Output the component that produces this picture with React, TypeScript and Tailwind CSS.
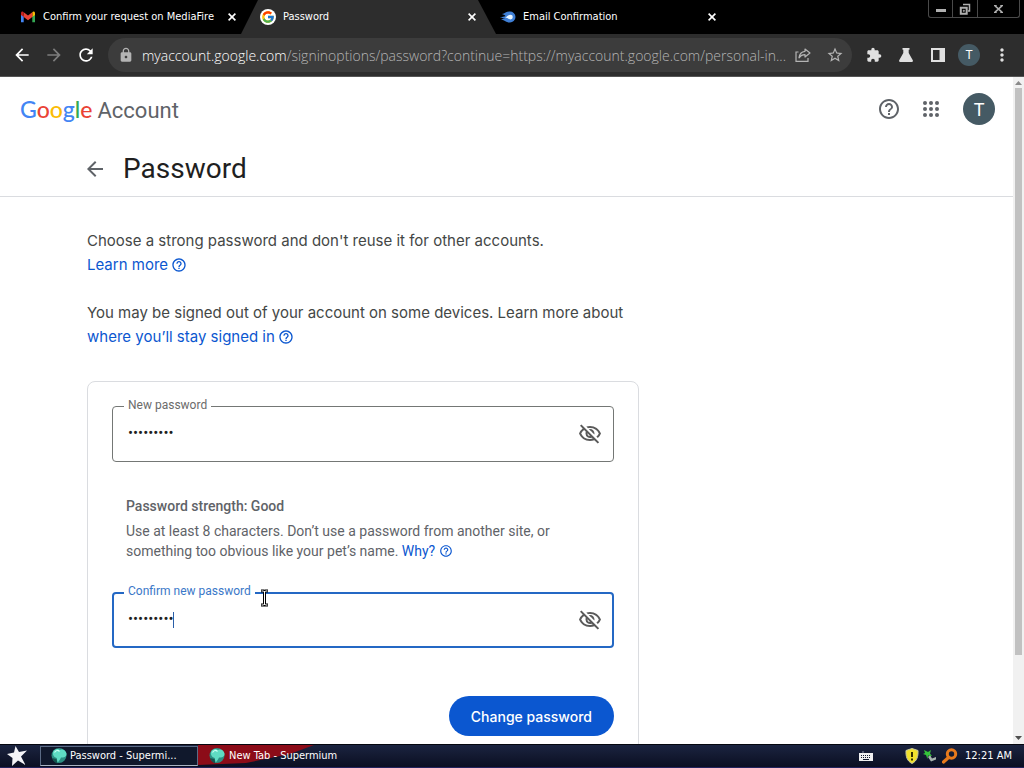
import type { ReactNode } from "react";
import { FcGoogle } from "react-icons/fc";
import {
  MdArrowBack,
  MdArrowForward,
  MdExtension,
  MdHelpOutline,
  MdLock,
  MdMoreVert,
  MdOutlineVisibilityOff,
  MdRefresh,
  MdStarBorder,
} from "react-icons/md";

const SYSTEM_FONT = "font-['DejaVu_Sans_Condensed','Noto_Sans',sans-serif]";

function GmailIcon() {
  return (
    <svg viewBox="0 0 16 12" className="h-3 w-4 shrink-0" aria-hidden="true">
      <path d="M1 2v9.300h2.700V5z" fill="#4285f4" />
      <path d="M15 2v9.300h-2.700V5z" fill="#34a853" />
      <path d="M12.300 1.200V6L15 4V2.200C15 .8 13.500 0 12.300 1.200z" fill="#fbbc04" />
      <path d="M3.700 6V1.200L8 4.500l4.300-3.300V6L8 9.200z" fill="#ea4335" />
      <path d="M1 2.200V4l2.700 2V1.200C2.500 0 1 .8 1 2.200z" fill="#c5221f" />
    </svg>
  );
}

function GoogleTabIcon() {
  return (
    <span className="flex size-4 shrink-0 items-center justify-center rounded-full bg-white">
      <FcGoogle className="size-3.5" />
    </span>
  );
}

function MediaFireIcon() {
  return (
    <svg viewBox="0 0 16 16" className="size-4 shrink-0" aria-hidden="true">
      <path d="M2 5c3-.5 4-2.500 7.500-2.500A5.500 5.500 0 0 1 15.500 8a5.500 5.500 0 0 1-6 5.500C6 13.500 5 11 1 10.500c2-.5 3-.7 4-.9C3.500 9 1.500 9 0 8.700 2 7.700 4 8 5.500 7 4.500 6 3.500 5.500 2 5z" fill="#3f7fd6" />
      <path d="M5 8.600C7 8 8 5.800 10.500 5.800a2.300 2.300 0 0 1 0 4.600C8.500 10.400 7.500 8.800 5 8.600z" fill="#e8f5ff" />
    </svg>
  );
}

function ShareIcon() {
  return (
    <svg viewBox="0 0 16 16" className="size-4" fill="none" stroke="currentColor" strokeWidth="1.200" aria-hidden="true">
      <path d="M3.500 5H1v9.400h12V11" />
      <path d="M10 2l5 4-5 4V7.700C7.500 7.700 5.500 8.500 4 10.800 4.400 7.500 6.500 4.700 10 4.300z" strokeLinejoin="round" />
    </svg>
  );
}

function FlaskIcon() {
  return (
    <svg viewBox="0 0 16 16" className="size-4" fill="currentColor" aria-hidden="true">
      <path d="M4.500 1h7v1.700H10.700V6l4.100 7.300c.4.800 0 1.700-.9 1.700H2.100c-.9 0-1.300-.9-.9-1.700L5.300 6V2.700h-.8z" />
    </svg>
  );
}

function SidePanelIcon() {
  return (
    <svg viewBox="0 0 16 16" className="size-4" aria-hidden="true">
      <path d="M1 1h14v14H1zM3 3v10h6.500V3z" fill="currentColor" fillRule="evenodd" />
    </svg>
  );
}

function AppsIcon() {
  return (
    <svg viewBox="0 0 16 16" className="size-4" fill="currentColor" aria-hidden="true">
      {[2, 8, 14].map((y) => [2, 8, 14].map((x) => <circle key={`${x}-${y}`} cx={x} cy={y} r="2" />))}
    </svg>
  );
}

function GlobeBirdIcon() {
  return (
    <svg viewBox="0 0 18 18" className="size-[18px] shrink-0" aria-hidden="true">
      <circle cx="9" cy="8.500" r="7.500" fill="#2c8f83" />
      <path d="M3.500 4C6 1.500 8 1.500 10 3c3-1.500 6 .5 6.500 3.500.3 3-2.500 4.500-5.500 4-1 2-2 3.500-3.500 5.500L6.800 11C3.500 10 2 7 3.500 4z" fill="#5fdcc3" />
      <path d="M4.500 5.500C6 3 8 3 9.500 4.500" stroke="#c9fff3" strokeWidth="1.200" fill="none" />
      <path d="M2 11c1 3 3 5 5.500 5.500L6.500 12z" fill="#15544f" />
    </svg>
  );
}

function Tab({ icon, title, active, className }: { icon: ReactNode; title: string; active?: boolean; className: string }) {
  return (
    <div className={`flex items-center text-[11px] text-white ${className}`}>
      {icon}
      <a href="#" aria-current={active ? "page" : undefined} className="ml-[7px] min-w-0 flex-1 overflow-hidden whitespace-nowrap">
        {title}
      </a>
      <button type="button" aria-label={`Close ${title}`} className="ml-2 shrink-0 p-[3px]">
        <svg viewBox="0 0 8 8" className="size-2" stroke="currentColor" strokeWidth="1.600" aria-hidden="true">
          <path d="M.6.6l6.800 6.800M7.400.6L.6 7.400" />
        </svg>
      </button>
    </div>
  );
}

function TabStrip() {
  return (
    <div className="flex h-[34px] shrink-0 bg-black">
      <Tab icon={<GmailIcon />} title="Confirm your request on MediaFire" className="w-[241px] pr-0.5 pl-5" />
      <Tab
        active
        icon={<GoogleTabIcon />}
        title="Password"
        className="w-[255px] bg-[#2d2d2d] pr-[17px] pl-[19px] [clip-path:polygon(17px_0,237px_0,100%_100%,0_100%)]"
      />
      <Tab icon={<MediaFireIcon />} title="Email Confirmation" className="w-[223px] pl-1" />
      <div className="ml-auto flex h-[18px] rounded-b-[3px] border border-t-0 border-[#4a4a4a] text-[#b0b0b0]">
        <button type="button" aria-label="Minimize" className="flex w-6 items-end justify-center border-r border-[#4a4a4a] pb-[5px]">
          <span className="h-[3px] w-2.5 bg-current" />
        </button>
        <button type="button" aria-label="Restore" className="flex w-[25px] items-center justify-center border-r border-[#4a4a4a]">
          <svg viewBox="0 0 12 12" className="size-3" fill="none" stroke="currentColor" aria-hidden="true">
            <path d="M4 1.500h6.500V8H9" strokeWidth="1.500" />
            <path d="M1.800 4.800h5.900v5.900H1.800z" strokeWidth="2" />
            <path d="M4.300 7.300h1v1h-1z" strokeWidth="1" />
          </svg>
        </button>
        <button type="button" aria-label="Close window" className="flex w-[41px] items-center justify-center">
          <svg viewBox="0 0 10 10" className="h-2 w-[9px]" preserveAspectRatio="none" stroke="currentColor" strokeWidth="2" aria-hidden="true">
            <path d="M1 1l8 8M9 1L1 9" />
            <path d="M0 .6h3M7 .6h3M0 9.400h3M7 9.400h3" strokeWidth="1.200" />
          </svg>
        </button>
      </div>
      <div className="w-1" />
    </div>
  );
}

function Toolbar() {
  return (
    <div className="flex h-[43px] shrink-0 items-center border-b border-[#555] bg-[#2d2d2d] px-3 text-[#e0e0e0]">
      <button type="button" aria-label="Back" className="text-white">
        <MdArrowBack className="size-5" />
      </button>
      <button type="button" aria-label="Forward" className="ml-3 text-[#7d7d7d]">
        <MdArrowForward className="size-5" />
      </button>
      <button type="button" aria-label="Reload" className="ml-3 text-white">
        <MdRefresh className="size-5" />
      </button>
      <div className="ml-3 flex h-[34px] min-w-0 flex-1 items-center rounded-full bg-[#3c3c3c] pr-2 pl-2.5 text-[#b4b4b4]">
        <MdLock className="size-4 shrink-0" />
        <p className="ml-2 min-w-0 flex-1 font-['Open_Sans',sans-serif] text-[14px] font-light whitespace-nowrap">
          <span className="text-white">myaccount.google.com</span>
          /signinoptions/password?continue=https://myaccount.google.com/personal-in...
        </p>
        <button type="button" aria-label="Share" className="ml-3">
          <ShareIcon />
        </button>
        <button type="button" aria-label="Bookmark this tab" className="ml-[15px]">
          <MdStarBorder className="size-[18px]" />
        </button>
      </div>
      <div className="ml-3.5 flex items-center gap-4">
        <button type="button" aria-label="Extensions">
          <MdExtension className="size-4" />
        </button>
        <button type="button" aria-label="Labs">
          <FlaskIcon />
        </button>
        <button type="button" aria-label="Side panel">
          <SidePanelIcon />
        </button>
      </div>
      <button type="button" className="ml-3 flex size-[22px] items-center justify-center rounded-full bg-[#455a64] font-['Roboto',sans-serif] text-[12px] text-white">
        T
      </button>
      <button type="button" aria-label="Menu" className="ml-3">
        <MdMoreVert className="size-5" />
      </button>
    </div>
  );
}

function HelpLink({ children }: { children: ReactNode }) {
  return (
    <a href="#" className="inline-flex items-center gap-[3px] text-[#0b57d0]">
      {children}
      <MdHelpOutline className="size-4" />
    </a>
  );
}

function PasswordField({ id, label, focused }: { id: string; label: string; focused?: boolean }) {
  return (
    <div
      className={`relative flex h-14 items-center rounded-[4px] ${
        focused ? "border-2 border-[#2468c4] pr-2.5 pl-3.5" : "border border-[#747775] pr-[11px] pl-[15px]"
      }`}
    >
      <label
        htmlFor={id}
        className={`absolute bg-white px-1 text-[12px] leading-4 ${
          focused ? "-top-[11px] left-2.5 text-[#3b78c8]" : "-top-2.5 left-[11px] text-[#6b6b6b]"
        }`}
      >
        {label}
      </label>
      <div className="relative min-w-0 flex-1">
        <input id={id} type="password" defaultValue="goodpass9" className="block w-full pb-0.5 text-[15px] text-[#1f1f1f] outline-none" />
        {focused && <span className="absolute top-1 left-[45px] h-4 w-px bg-[#2a5ea8]" />}
      </div>
      <button type="button" aria-label="Show password" className="text-[#5a5a5a]">
        <MdOutlineVisibilityOff className="size-6" />
      </button>
      {focused && (
        <svg viewBox="0 0 9 18" className="absolute -top-[5px] left-[146px] h-[18px] w-[9px]" fill="none" aria-hidden="true">
          <path d="M1 2h2.500l1 1 1-1H8M4.500 2v14M1 16h2.500l1-1 1 1H8" stroke="#000" strokeWidth="3" />
          <path d="M1.500 2h2l1 1 1-1h2M4.500 2v14M1.500 16h2l1-1 1 1h2" stroke="#fff" strokeWidth="1" />
        </svg>
      )}
    </div>
  );
}

function AccountPage() {
  return (
    <div className="min-w-0 flex-1 overflow-hidden bg-white font-['Roboto',sans-serif]">
      <header className="flex h-16 items-center pr-[18px] pl-5 text-[#5f6368]">
        <a href="#" className="flex items-baseline gap-[5px]">
          <span className="font-['Lato',sans-serif] text-[23px] font-medium">
            <span className="text-[#4285f4]">G</span>
            <span className="text-[#ea4335]">o</span>
            <span className="text-[#fbbc04]">o</span>
            <span className="text-[#4285f4]">g</span>
            <span className="text-[#34a853]">l</span>
            <span className="text-[#ea4335]">e</span>
          </span>
          <span className="text-[22px]">Account</span>
        </a>
        <button type="button" aria-label="Help" className="ml-auto">
          <MdHelpOutline className="size-6" />
        </button>
        <button type="button" aria-label="Google apps" className="ml-[22px]">
          <AppsIcon />
        </button>
        <button type="button" className="ml-6 flex size-8 items-center justify-center rounded-full bg-[#455a64] text-[18px] text-white">
          T
        </button>
      </header>
      <div className="flex h-14 items-center border-b border-[#dadce0] pl-[83px]">
        <button type="button" aria-label="Go back" className="text-[#5f6368]">
          <MdArrowBack className="size-6" />
        </button>
        <h1 className="ml-4 text-[28px] text-[#1f1f1f]">Password</h1>
      </div>
      <main className="max-w-[639px] pt-8 pl-[87px] text-[#444746]">
        <div className="font-['Inter',sans-serif] text-[15px] leading-6">
          <p>
            Choose a strong password and don't reuse it for other accounts.
            <br />
            <HelpLink>Learn more</HelpLink>
          </p>
          <p className="mt-6">
            You may be signed out of your account on some devices. Learn more about
            <br />
            <HelpLink>where you’ll stay signed in</HelpLink>
          </p>
        </div>
        <form className="mt-8 rounded-lg border border-[#dadce0] p-6">
          <PasswordField id="new-password" label="New password" />
          <div className="mt-[34px] mb-[31px] px-3.5 text-[14px] leading-5 text-[#5f6368]">
            <p className="font-medium">Password strength: Good</p>
            <p className="mt-[5px]">
              Use at least 8 characters. Don’t use a password from another site, or
              <br />
              something too obvious like your pet’s name.{" "}
              <a href="#" className="inline-flex items-center gap-1 text-[#0b57d0]">
                Why?
                <MdHelpOutline className="size-3.5" />
              </a>
            </p>
          </div>
          <PasswordField id="confirm-password" label="Confirm new password" focused />
          <div className="mt-12 flex justify-end">
            <button type="button" className="h-10 rounded-full bg-[#0b57d0] px-[22px] font-['Inter',sans-serif] text-[14px] font-medium text-white">
              Change password
            </button>
          </div>
        </form>
      </main>
    </div>
  );
}

function Scrollbar() {
  return (
    <div className="flex w-[11px] shrink-0 flex-col items-center bg-[#f1f1f1] py-1" aria-hidden="true">
      <svg viewBox="0 0 7 4" className="h-1 w-[7px]">
        <path d="M0 4l3.500-4L7 4z" fill="#8a8a8a" />
      </svg>
      <div className="mt-[3px] w-[7px] grow-[567] bg-[#c1c1c1]" />
      <div className="grow-[81]" />
      <svg viewBox="0 0 7 4" className="h-1 w-[7px]">
        <path d="M0 0l3.500 4L7 0z" fill="#505050" />
      </svg>
    </div>
  );
}

function Taskbar() {
  return (
    <footer className="flex h-6 shrink-0 items-center border-t border-b border-t-[#05070f] border-b-[#23235c] bg-linear-to-b from-[#1b2440] to-[#0b0f22] pr-3 text-[11px] text-white">
      <button type="button" aria-label="Start" className="ml-[7px]">
        <svg viewBox="0 0 20 20" className="size-5" aria-hidden="true">
          <path d="M8.500 0l3.500 6 8-1.500-6 6L18.500 19l-7.500-4.500L5 20l.5-8L0 8l7-1.500z" fill="#f4f4f8" />
        </svg>
      </button>
      <button type="button" className="ml-[13px] flex h-5 w-[158px] items-center gap-0.5 border border-[#5b6b85] border-b-[#aab4c4] bg-[#10182c] pl-[9px]">
        <GlobeBirdIcon />
        Password - Supermi...
      </button>
      <button type="button" className="relative flex h-full w-[158px] items-center pl-2.5">
        <svg viewBox="0 0 158 22" preserveAspectRatio="none" className="absolute inset-0 h-full w-full" aria-hidden="true">
          <path d="M0 0h116L92 9 48 18 0 20z" fill="#8c0c18" />
        </svg>
        <span className="relative flex items-center gap-[3px]">
          <GlobeBirdIcon />
          New Tab - Supermium
        </span>
      </button>
      <div className="ml-auto flex items-center">
        <svg viewBox="0 0 14 10" className="mr-8 h-2.5 w-3.5" aria-hidden="true">
          <path d="M4 0v2" stroke="#8a93a8" />
          <path d="M0 2h14v8H0z" fill="#f0f0f0" />
          <path d="M2 4.500h10M2 6.500h10" stroke="#11182c" strokeDasharray="1 1" />
          <path d="M4 8.500h6" stroke="#11182c" />
        </svg>
        <svg viewBox="0 0 14 16" className="h-4 w-3.5" aria-hidden="true">
          <path d="M7 .5l6 2c.3 6-1 10.500-6 13-5-2.500-6.300-7-6-13z" fill="#f2e22c" stroke="#c9c9a0" />
          <path d="M7 4v5M7 10.500v2" stroke="#332f00" strokeWidth="2" />
        </svg>
        <svg viewBox="0 0 14 14" className="ml-1 size-3.5" aria-hidden="true">
          <path d="M5 8l3 4.500 5-2V8L9 9.500 7 6z" fill="#a9b4b0" />
          <path d="M1 1l4 2 3-2-1 3.500L9 7 5 6.500 4.500 10 3 6 0 5l2-1z" fill="#35c43a" />
        </svg>
        <svg viewBox="0 0 16 16" className="ml-[5px] size-4" fill="none" aria-hidden="true">
          <circle cx="9.500" cy="6" r="4.200" stroke="#e87a1c" strokeWidth="3" />
          <path d="M6.500 9.500L1.500 14" stroke="#e87a1c" strokeWidth="3.200" strokeLinecap="round" />
        </svg>
        <time className="ml-[7px]">12:21 AM</time>
      </div>
    </footer>
  );
}

export default function App() {
  return (
    <div className={`flex h-screen flex-col overflow-hidden bg-white ${SYSTEM_FONT}`}>
      <TabStrip />
      <Toolbar />
      <div className="flex min-h-0 flex-1">
        <AccountPage />
        <Scrollbar />
      </div>
      <Taskbar />
    </div>
  );
}
